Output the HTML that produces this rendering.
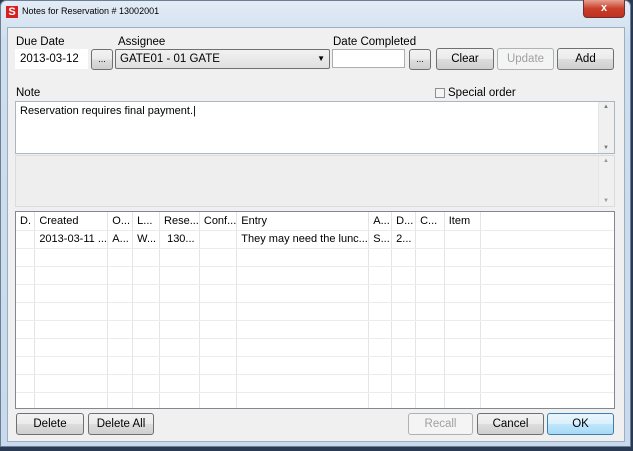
<!DOCTYPE html>
<html><head><meta charset="utf-8"><style>
*{box-sizing:border-box;margin:0;padding:0}
body{width:633px;height:451px;overflow:hidden;background:#2a3a52;font-family:"Liberation Sans",sans-serif;font-size:11px;color:#000;position:relative}
.a{position:absolute}
.frame{left:0;top:0;width:631px;height:447px;background:linear-gradient(#e3ecf6,#cfdeee 40px,#c8daec);border:1px solid #6d7f95;border-radius:6px 6px 0 0}
.client{left:7px;top:27px;width:618px;height:415px;background:#f0f0f0;border:1px solid #9aaec4}
.btn{position:absolute;height:21px;border:1px solid #707070;border-radius:3px;background:linear-gradient(#f2f2f2 0,#ebebeb 50%,#dddddd 51%,#cfcfcf 100%);text-align:center;line-height:19px;font-size:11.5px}
.dis{border-color:#adb2b5;color:#a0a0a0;background:#f4f4f4}
.inp{position:absolute;background:#fff;border:1px solid #abadb3;font-size:11.5px;padding-left:4px;line-height:18px}
.lbl{position:absolute;font-size:11.5px}
.sb{position:absolute;right:0;top:0;width:16px;height:100%;background:#f0f0f0;border-left:1px solid #e6e6e6}
table{border-collapse:collapse;font-size:11px}
td{border-right:1px solid #e4e4e4;border-bottom:1px solid #ececec;height:18px;padding-left:4px;white-space:nowrap;overflow:hidden}
</style></head><body>
<div class="a frame"></div>
<div class="a" style="left:6px;top:6px;width:12px;height:12px;background:#d42020;color:#fff;font-weight:bold;font-size:11px;line-height:12px;text-align:center">S</div>
<div class="a" style="left:22px;top:6px;font-size:9px">Notes for Reservation # 13002001</div>
<div class="a" style="left:583px;top:0;width:42px;height:18px;border:1px solid #6d3030;border-top:none;border-radius:0 0 4px 4px;background:linear-gradient(#e8a090,#c8402a 50%,#c03020);color:#fff;text-align:center;font-weight:bold;font-size:11px;line-height:17px">x</div>
<div class="a client"></div>

<div class="lbl" style="left:16px;top:36px">Due Date</div>
<div class="lbl" style="left:118px;top:36px">Assignee</div>
<div class="lbl" style="left:333px;top:36px">Date Completed</div>
<div class="inp" style="left:15px;top:49px;width:73px;height:20px;border-color:#fff">2013-03-12</div>
<div class="btn" style="left:91px;top:49px;width:22px;font-size:9px">...</div>
<div class="inp" style="left:115px;top:49px;width:215px;height:20px;background:linear-gradient(#f2f2f2,#e0e0e0);border-color:#707070;border-radius:2px">GATE01 - 01 GATE<span style="position:absolute;right:4px;top:0;font-size:8px">▼</span></div>
<div class="inp" style="left:332px;top:49px;width:73px;height:19px"></div>
<div class="btn" style="left:409px;top:49px;width:22px;font-size:9px">...</div>
<div class="btn" style="left:436px;top:48px;width:58px;height:22px;line-height:20px">Clear</div>
<div class="btn dis" style="left:497px;top:48px;width:57px;height:22px;line-height:20px">Update</div>
<div class="btn" style="left:557px;top:48px;width:57px;height:22px;line-height:20px">Add</div>

<div class="lbl" style="left:16px;top:87px">Note</div>
<div class="a" style="left:435px;top:88px;width:10px;height:10px;border:1px solid #8f8f8f;background:#f4f4f4"></div>
<div class="lbl" style="left:448px;top:87px">Special order</div>

<div class="a" style="left:15px;top:101px;width:600px;height:53px;background:#fff;border:1px solid #aab6c4;padding:3px 4px;font-size:11px">Reservation requires final payment.|<div class="sb"><span style="position:absolute;left:4px;top:2px;font-size:6px;color:#777">▲</span><span style="position:absolute;left:4px;bottom:2px;font-size:6px;color:#777">▼</span></div></div>
<div class="a" style="left:15px;top:155px;width:600px;height:52px;background:#eeeeee;border:1px solid #dcdcdc"><div class="sb"><span style="position:absolute;left:4px;top:2px;font-size:6px;color:#999">▲</span><span style="position:absolute;left:4px;bottom:2px;font-size:6px;color:#999">▼</span></div></div>

<div class="a" style="left:15px;top:211px;width:600px;height:198px;background:#fff;border:1px solid #828790;overflow:hidden">
<table>
<tr><td style="width:19px">D.</td><td style="width:73px">Created</td><td style="width:25px">O...</td><td style="width:27px">L...</td><td style="width:38px">Rese...</td><td style="width:37px">Conf...</td><td style="width:132px">Entry</td><td style="width:23px">A...</td><td style="width:24px">D...</td><td style="width:29px">C...</td><td style="width:37px">Item</td><td style="width:140px;border-right:none"></td></tr>
<tr><td></td><td>2013-03-11 ...</td><td>A...</td><td>W...</td><td>&nbsp;130...</td><td></td><td>They may need the lunc...</td><td>S...</td><td>2...</td><td></td><td></td><td style="border-right:none"></td></tr>
<tr><td></td><td></td><td></td><td></td><td></td><td></td><td></td><td></td><td></td><td></td><td></td><td style="border-right:none"></td></tr>
<tr><td></td><td></td><td></td><td></td><td></td><td></td><td></td><td></td><td></td><td></td><td></td><td style="border-right:none"></td></tr>
<tr><td></td><td></td><td></td><td></td><td></td><td></td><td></td><td></td><td></td><td></td><td></td><td style="border-right:none"></td></tr>
<tr><td></td><td></td><td></td><td></td><td></td><td></td><td></td><td></td><td></td><td></td><td></td><td style="border-right:none"></td></tr>
<tr><td></td><td></td><td></td><td></td><td></td><td></td><td></td><td></td><td></td><td></td><td></td><td style="border-right:none"></td></tr>
<tr><td></td><td></td><td></td><td></td><td></td><td></td><td></td><td></td><td></td><td></td><td></td><td style="border-right:none"></td></tr>
<tr><td></td><td></td><td></td><td></td><td></td><td></td><td></td><td></td><td></td><td></td><td></td><td style="border-right:none"></td></tr>
<tr><td></td><td></td><td></td><td></td><td></td><td></td><td></td><td></td><td></td><td></td><td></td><td style="border-right:none"></td></tr>
<tr><td></td><td></td><td></td><td></td><td></td><td></td><td></td><td></td><td></td><td></td><td></td><td style="border-right:none"></td></tr>
<tr><td></td><td></td><td></td><td></td><td></td><td></td><td></td><td></td><td></td><td></td><td></td><td style="border-right:none"></td></tr>
</table></div>

<div class="btn" style="left:16px;top:413px;width:68px;height:22px;line-height:20px">Delete</div>
<div class="btn" style="left:88px;top:413px;width:66px;height:22px;line-height:20px">Delete All</div>
<div class="btn dis" style="left:408px;top:413px;width:65px;height:22px;line-height:20px">Recall</div>
<div class="btn" style="left:477px;top:413px;width:67px;height:22px;line-height:20px">Cancel</div>
<div class="btn" style="left:547px;top:413px;width:67px;height:22px;line-height:20px;border-color:#3c7fb1;background:linear-gradient(#eaf6fd,#d9f0fc 50%,#bee6fd 51%,#a7d9f5)">OK</div>
</body></html>
